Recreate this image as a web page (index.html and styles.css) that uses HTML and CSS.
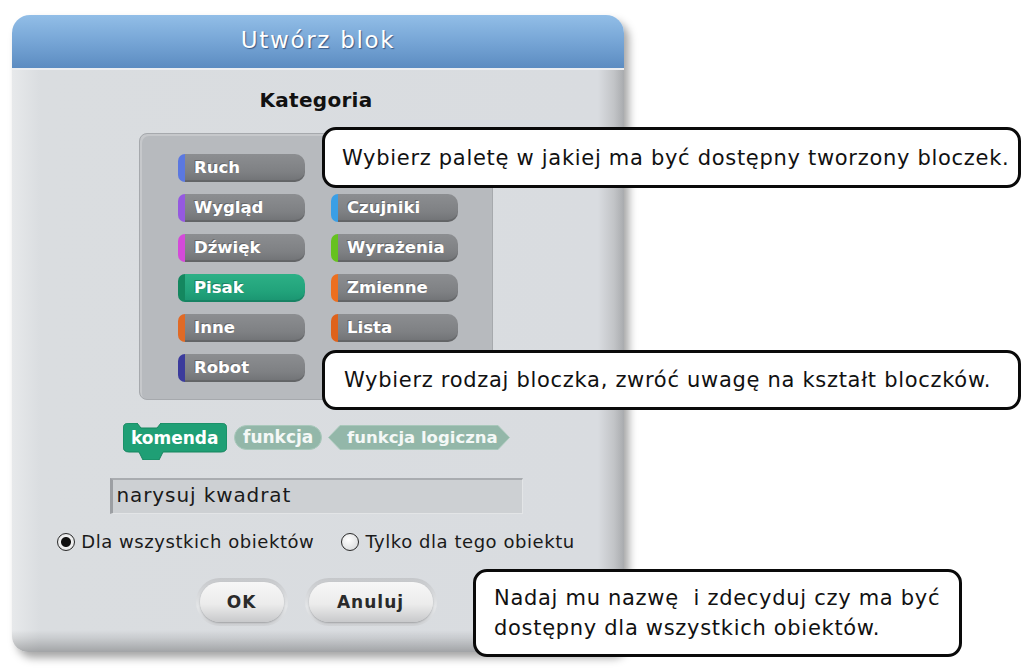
FILE: index.html
```html
<!DOCTYPE html>
<html lang="pl">
<head>
<meta charset="utf-8">
<title>Utwórz blok</title>
<link rel="stylesheet" href="styles.css">
</head>
<body>
<div class="page">
  <div class="dialog">
    <div class="titlebar">Utwórz blok</div>
    <div class="body">
      <div class="heading">Kategoria</div>
      <div class="palette">
        <div class="cat ruch">Ruch</div>
        <div class="cat kontrola"></div>
        <div class="cat wyglad">Wygląd</div>
        <div class="cat czujniki">Czujniki</div>
        <div class="cat dzwiek">Dźwięk</div>
        <div class="cat wyrazenia">Wyrażenia</div>
        <div class="cat pisak">Pisak</div>
        <div class="cat zmienne">Zmienne</div>
        <div class="cat inne">Inne</div>
        <div class="cat lista">Lista</div>
        <div class="cat robot">Robot</div>
        <div class="cat-empty"></div>
      </div>
      <div class="types">
        <svg class="blk-command" width="104" height="37" viewBox="0 0 104 37">
          <path class="cmd-shape" d="M0 6 Q0 0 6 0 L14 0 L18 5 L34 5 L38 0 L98 0 Q104 0 104 6 L104 23 Q104 29 98 29 L40 29 L36 37 L20 37 L16 29 L6 29 Q0 29 0 23 Z"/>
          <text class="blk-text" x="8" y="21">komenda</text>
        </svg>
        <svg class="blk-reporter" width="88" height="25" viewBox="0 0 88 25">
          <rect class="rep-shape" x="0.5" y="0.5" width="87" height="24" rx="12" ry="12"/>
          <text class="blk-text pale" x="9" y="18">funkcja</text>
        </svg>
        <svg class="blk-predicate" width="182" height="25" viewBox="0 0 182 25">
          <polygon class="rep-shape" points="0.5,12.5 12,0.5 170,0.5 181.5,12.5 170,24.5 12,24.5"/>
          <text class="blk-text pale small" x="19" y="18">funkcja logiczna</text>
        </svg>
      </div>
      <div class="name-input">narysuj kwadrat</div>
      <div class="scope">
        <span class="radio on"></span><span class="radio-label">Dla wszystkich obiektów</span>
        <span class="radio"></span><span class="radio-label">Tylko dla tego obiektu</span>
      </div>
      <div class="buttons">
        <div class="btn ok"><span>OK</span></div>
        <div class="btn cancel"><span>Anuluj</span></div>
      </div>
    </div>
  </div>

  <div class="callout c1">Wybierz paletę w jakiej ma być dostępny tworzony bloczek.</div>
  <div class="callout c2">Wybierz rodzaj bloczka, zwróć uwagę na kształt bloczków.</div>
  <div class="callout c3">Nadaj mu nazwę&nbsp; i zdecyduj czy ma być<br>dostępny dla wszystkich obiektów.</div>
</div>
</body>
</html>
```

FILE: styles.css
```css
html, body {
  margin: 0;
  padding: 0;
  background: #ffffff;
}

.page {
  position: relative;
  width: 1023px;
  height: 672px;
  overflow: hidden;
  font-family: "DejaVu Sans", "Liberation Sans", sans-serif;
}

.dialog {
  margin: 15px 0 0 12px;
  width: 612px;
  border-radius: 18px 18px 16px 16px;
  box-shadow: 5px 6px 8px rgba(0, 0, 0, 0.35);
  overflow: hidden;
}

.titlebar {
  height: 53px;
  background: linear-gradient(#92bee7, #74a3d4 55%, #5c8cc1);
  color: #ffffff;
  font-size: 23px;
  letter-spacing: 1.7px;
  text-align: center;
  line-height: 50px;
  text-shadow: 1px 1px 1px rgba(30, 50, 90, 0.65);
  border-bottom: 2px solid #eceef1;
}

.body {
  display: flex;
  flex-direction: column;
  align-items: center;
  padding: 18px 4px 26px 0;
  background:
    linear-gradient(to bottom, rgba(0,0,0,0) calc(100% - 22px), rgba(0,0,0,0.08) calc(100% - 14px), rgba(0,0,0,0.26) 100%),
    linear-gradient(to right, #e7e9eb 0, #dadde0 28px, #d9dce0 calc(100% - 26px), #c2c4c7 calc(100% - 10px), #a9abae 100%);
}

.heading {
  height: 24px;
  line-height: 24px;
  font-weight: bold;
  font-size: 20px;
  letter-spacing: 0.3px;
  color: #111111;
}

.palette {
  margin-top: 21px;
  width: 354px;
  height: 267px;
  box-sizing: border-box;
  padding: 20px 36px 19px 38px;
  display: grid;
  grid-template-columns: 127px 127px;
  grid-auto-rows: 28px;
  column-gap: 26px;
  row-gap: 12px;
  background: #b7babe;
  border: 1px solid #a6a9ad;
  border-radius: 8px;
  box-shadow: inset 2px 2px 0 #c6c8cb;
}

.cat {
  --c: #888;
  height: 28px;
  box-sizing: border-box;
  border-left: 7px solid var(--c);
  border-radius: 7px 10px 10px 7px;
  padding-left: 9px;
  background: linear-gradient(#8c8e91, #7e8083 65%, #6f7174);
  box-shadow: inset 0 -2px 0 rgba(0, 0, 0, 0.12);
  color: #ffffff;
  font-weight: bold;
  font-size: 16.5px;
  line-height: 27px;
  text-shadow: -1px -1px 0 rgba(0, 0, 0, 0.25);
  white-space: nowrap;
}

.ruch { --c: #5b78e0; }
.kontrola { --c: #e1a91a; }
.wyglad { --c: #9559e0; }
.czujniki { --c: #3a9fe6; }
.dzwiek { --c: #d44ad9; }
.wyrazenia { --c: #66c21f; }
.pisak {
  --c: #14875f;
  background: linear-gradient(#2db086, #21a27a 65%, #1a9370);
}
.zmienne { --c: #ec6f1f; }
.inne { --c: #e06a26; }
.lista { --c: #de621b; }
.robot { --c: #3b3b9c; }

.types {
  margin-top: 23px;
  height: 37px;
  display: flex;
  align-items: flex-start;
  gap: 7px;
}

.blk-reporter,
.blk-predicate {
  margin-top: 2px;
}

.blk-predicate {
  margin-left: -1px;
}

.cmd-shape {
  fill: #1f9f75;
  stroke: #17855f;
  stroke-width: 1;
}

.rep-shape {
  fill: #93b7a9;
  stroke: #a9c8bb;
  stroke-width: 1;
}

.blk-text {
  fill: #ffffff;
  font-family: "DejaVu Sans", sans-serif;
  font-weight: bold;
  font-size: 17px;
}

.blk-text.pale {
  fill: #f4f8f6;
}

.blk-text.small {
  font-size: 16.5px;
}

.name-input {
  margin-top: 18px;
  width: 413px;
  height: 36px;
  box-sizing: border-box;
  border-style: solid;
  border-width: 2px 1px 1px 3px;
  border-color: #a9acb0 #e3e5e7 #e3e5e7 #9c9fa3;
  background: #cdd0d3;
  padding-left: 4px;
  font-size: 20px;
  letter-spacing: 0.9px;
  line-height: 31px;
  color: #1a1a1a;
}

.scope {
  margin-top: 17px;
  height: 22px;
  display: flex;
  align-items: center;
  font-size: 18px;
  letter-spacing: 0.55px;
  color: #1a1a1a;
}

.radio {
  width: 18px;
  height: 18px;
  box-sizing: border-box;
  border-radius: 50%;
  border: 1.5px solid #2a2a2a;
  background: radial-gradient(circle at 40% 35%, #ffffff, #d2d4d6);
}

.radio.on {
  background: radial-gradient(circle, #111111 0 4.5px, #f2f2f2 5.5px, #d7d9db 100%);
}

.radio-label {
  margin-left: 6px;
  margin-right: 27px;
  line-height: 22px;
}

.radio-label:last-child {
  margin-right: 0;
}

.buttons {
  margin-top: 25px;
  display: flex;
  gap: 17px;
}

.btn {
  height: 48px;
  box-sizing: border-box;
  padding: 4px;
  border-radius: 24px;
  background: linear-gradient(#c5c7ca, #e4e6e8 60%, #cfd1d4);
}

.btn.ok { width: 92px; }
.btn.cancel { width: 132px; }

.btn span {
  display: flex;
  align-items: center;
  justify-content: center;
  height: 100%;
  border-radius: 20px;
  background: linear-gradient(#f7f7f7 0, #ececec 55%, #c8c9cb 100%);
  box-shadow: 0 1px 2px rgba(0, 0, 0, 0.25);
  color: #2a2a2a;
  font-weight: bold;
  font-size: 17px;
  letter-spacing: 1px;
}

.callout {
  position: absolute;
  box-sizing: border-box;
  display: flex;
  align-items: center;
  background: #ffffff;
  border: 3px solid #0a0a0a;
  border-radius: 14px;
  font-family: "DejaVu Sans", "Liberation Sans", sans-serif;
  font-size: 21px;
  letter-spacing: 0.7px;
  color: #111111;
  white-space: nowrap;
}

.c1 {
  left: 322px;
  top: 127px;
  width: 699px;
  height: 61px;
  padding-left: 17px;
}

.c2 {
  left: 322px;
  top: 350px;
  width: 699px;
  height: 60px;
  padding-left: 19px;
}

.c3 {
  left: 473px;
  top: 569px;
  width: 489px;
  height: 88px;
  padding-left: 18px;
  line-height: 30px;
}
```
